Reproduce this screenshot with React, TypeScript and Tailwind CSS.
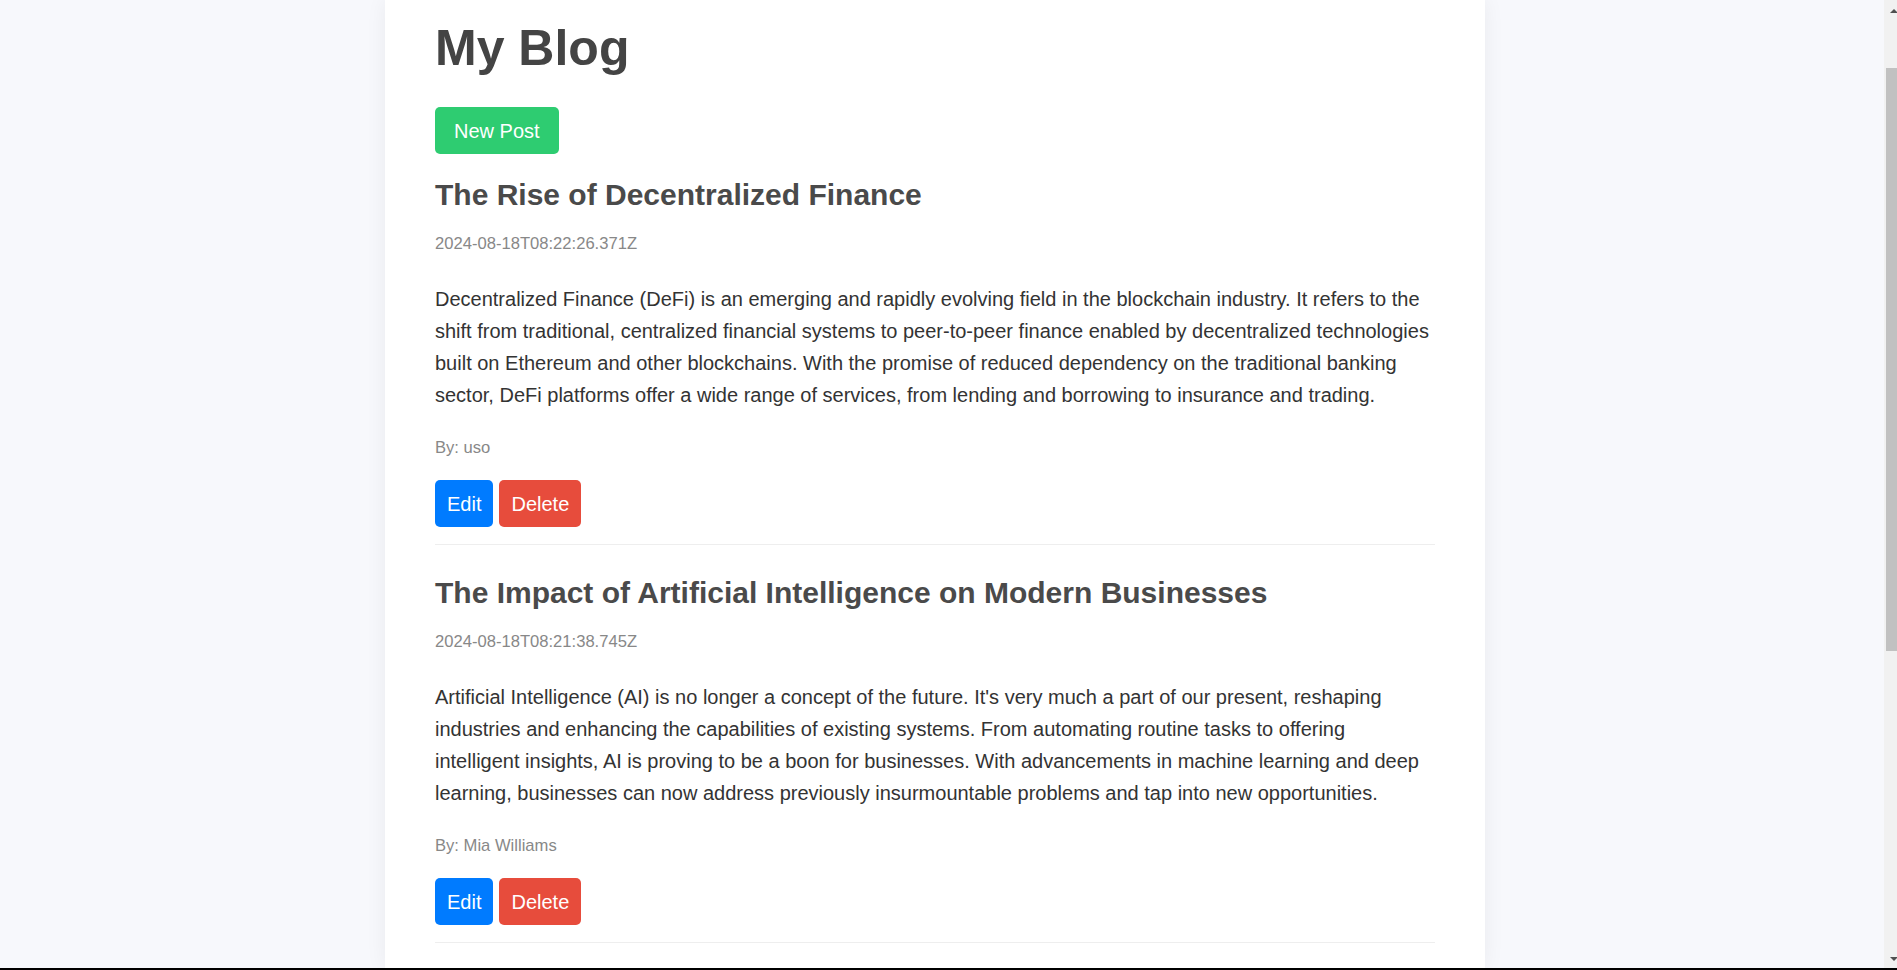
const posts = [
  {
    id: 1,
    title: "The Rise of Decentralized Finance",
    date: "2024-08-18T08:22:26.371Z",
    body: "Decentralized Finance (DeFi) is an emerging and rapidly evolving field in the blockchain industry. It refers to the shift from traditional, centralized financial systems to peer-to-peer finance enabled by decentralized technologies built on Ethereum and other blockchains. With the promise of reduced dependency on the traditional banking sector, DeFi platforms offer a wide range of services, from lending and borrowing to insurance and trading.",
    author: "uso",
  },
  {
    id: 2,
    title: "The Impact of Artificial Intelligence on Modern Businesses",
    date: "2024-08-18T08:21:38.745Z",
    body: "Artificial Intelligence (AI) is no longer a concept of the future. It's very much a part of our present, reshaping industries and enhancing the capabilities of existing systems. From automating routine tasks to offering intelligent insights, AI is proving to be a boon for businesses. With advancements in machine learning and deep learning, businesses can now address previously insurmountable problems and tap into new opportunities.",
    author: "Mia Williams",
  },
];

function Scrollbar() {
  return (
    <div className="w-[13px] shrink-0 bg-[#f1f1f1] flex flex-col">
      <div className="h-[17px] pt-[9px] pl-[6px]">
        <div className="w-0 h-0 border-l-[4px] border-r-[4px] border-b-[4px] border-l-transparent border-r-transparent border-b-[#505050]"></div>
      </div>
      <div className="flex-1 pt-[51px] pl-[2px]">
        <div className="h-[583px] bg-[#c1c1c1]"></div>
      </div>
      <div className="h-[17px] pt-[6px] pl-[6px]">
        <div className="w-0 h-0 border-l-[4px] border-r-[4px] border-t-[4px] border-l-transparent border-r-transparent border-t-[#505050]"></div>
      </div>
    </div>
  );
}

export default function App() {
  return (
    <div className="h-[970px] flex flex-col overflow-hidden font-['Liberation_Sans',Arial,sans-serif]">
      <div className="flex flex-1 min-h-0">
        <div className="flex-1 min-w-0 bg-[#f7f8fc] flex justify-center pr-[14px] overflow-hidden">
          <div className="w-[1100px] shrink-0 bg-white shadow-[0_0_20px_rgba(0,0,0,0.06)] px-[50px] pt-[19px]">
            <h1 className="text-[50px] font-bold leading-[normal] text-[#444]">My Blog</h1>

            <button className="mt-[30px] h-[47px] px-[19px] bg-[#2ecc71] text-white text-[20px] rounded-[5px]">
              New Post
            </button>

            <div>
              {posts.map((post) => (
                <div key={post.id} className="pt-[24px] pb-[17px] mb-[7px] border-b border-[#eee]">
                  <h2 className="text-[30px] font-bold leading-[normal] text-[#4a4a4a]">{post.title}</h2>
                  <p className="mt-[22px] text-[16.6px] leading-[20px] text-[#888]">{post.date}</p>
                  <p className="mt-[29px] text-[20px] leading-[32px] text-[#333]">{post.body}</p>
                  <p className="mt-[27px] text-[16.6px] leading-[20px] text-[#888]">By: {post.author}</p>
                  <div className="mt-[22px] flex gap-[6px]">
                    <button className="h-[47px] px-[12px] bg-[#007bff] text-white text-[20px] rounded-[5px]">
                      Edit
                    </button>
                    <button className="h-[47px] px-[12px] bg-[#e74c3c] text-white text-[20px] rounded-[5px]">
                      Delete
                    </button>
                  </div>
                </div>
              ))}
            </div>
          </div>
        </div>
        <Scrollbar />
      </div>
      <div className="h-[2px] bg-black"></div>
    </div>
  );
}
